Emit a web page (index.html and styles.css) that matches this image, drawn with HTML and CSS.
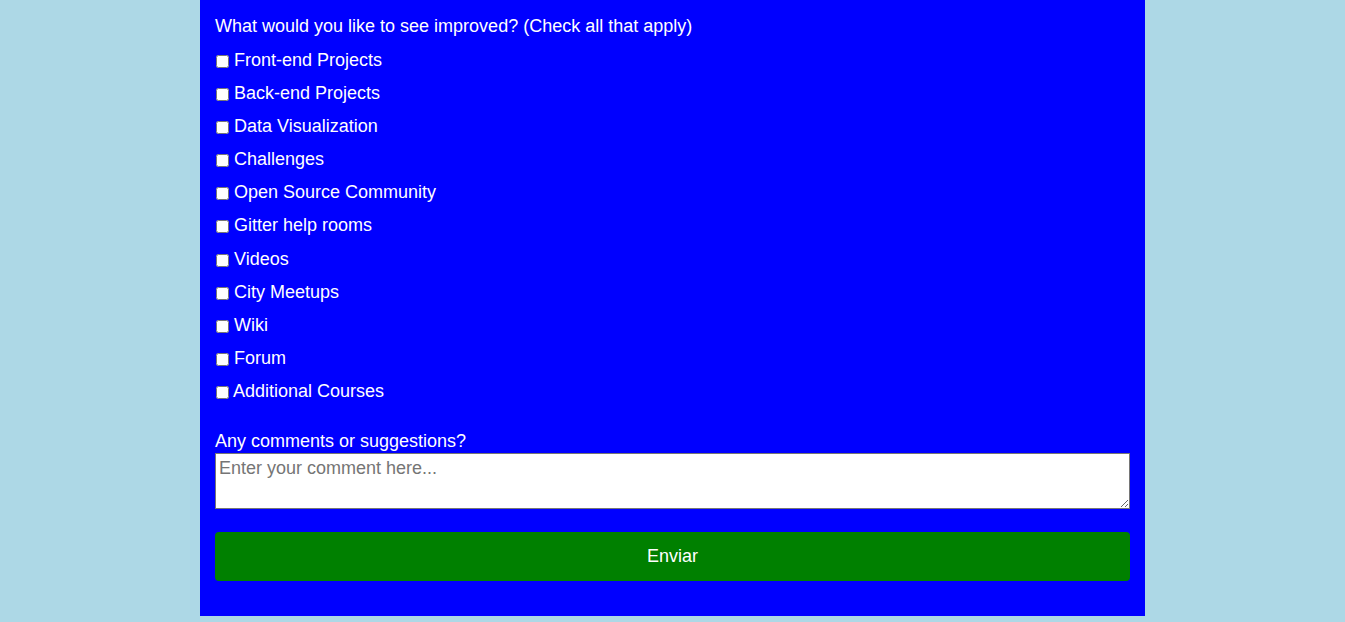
FILE: index.html
```html
<!DOCTYPE html>
<html lang="en">
<head>
<meta charset="utf-8">
<title>Survey</title>
<link rel="stylesheet" href="styles.css">
</head>
<body>
<form class="survey">
  <p class="question">What would you like to see improved? (Check all that apply)</p>
  <div class="options">
    <label class="option"><input type="checkbox" class="check"> Front-end Projects</label>
    <label class="option"><input type="checkbox" class="check"> Back-end Projects</label>
    <label class="option"><input type="checkbox" class="check"> Data Visualization</label>
    <label class="option"><input type="checkbox" class="check"> Challenges</label>
    <label class="option"><input type="checkbox" class="check"> Open Source Community</label>
    <label class="option"><input type="checkbox" class="check"> Gitter help rooms</label>
    <label class="option"><input type="checkbox" class="check"> Videos</label>
    <label class="option"><input type="checkbox" class="check"> City Meetups</label>
    <label class="option"><input type="checkbox" class="check"> Wiki</label>
    <label class="option"><input type="checkbox" class="check"> Forum</label>
    <label class="option"><input type="checkbox" class="check"> Additional Courses</label>
  </div>
  <label class="comment-label" for="comment">Any comments or suggestions?</label>
  <textarea id="comment" class="comment" placeholder="Enter your comment here..."></textarea>
  <button type="submit" class="submit">Enviar</button>
</form>
</body>
</html>
```
FILE: styles.css
```css
html, body {
  margin: 0;
  padding: 0;
}
body {
  background: #add8e6;
}
.survey {
  box-sizing: border-box;
  width: 945px;
  margin: 0 auto;
  padding: 16px 15px 35px;
  background: #0000ff;
  color: #ffffff;
  font-family: "Liberation Sans", Arial, sans-serif;
  font-size: 18px;
}
.question {
  margin: 0 0 6.5px;
  line-height: 21px;
}
.options {
  display: flex;
  flex-direction: column;
}
.option {
  display: block;
  height: 33.2px;
  line-height: 33.2px;
}
.check {
  width: 13px;
  height: 13px;
  margin: 0 0 0 1px;
  vertical-align: -2px;
}
.comment-label {
  display: block;
  margin-top: 22.5px;
  line-height: 21px;
}
.comment {
  display: block;
  box-sizing: border-box;
  width: 100%;
  height: 56px;
  margin: 1px 0 0;
  padding: 4px 3px 2px;
  border: 1px solid #767676;
  font-family: "Liberation Sans", Arial, sans-serif;
  font-size: 18px;
  color: #000;
  background: #fff;
}
.comment::placeholder {
  color: #757575;
}
.submit {
  display: block;
  width: 100%;
  height: 49px;
  margin-top: 23px;
  border: none;
  border-radius: 4px;
  background: #008000;
  color: #ffffff;
  font-family: "Liberation Sans", Arial, sans-serif;
  font-size: 18px;
}
```
